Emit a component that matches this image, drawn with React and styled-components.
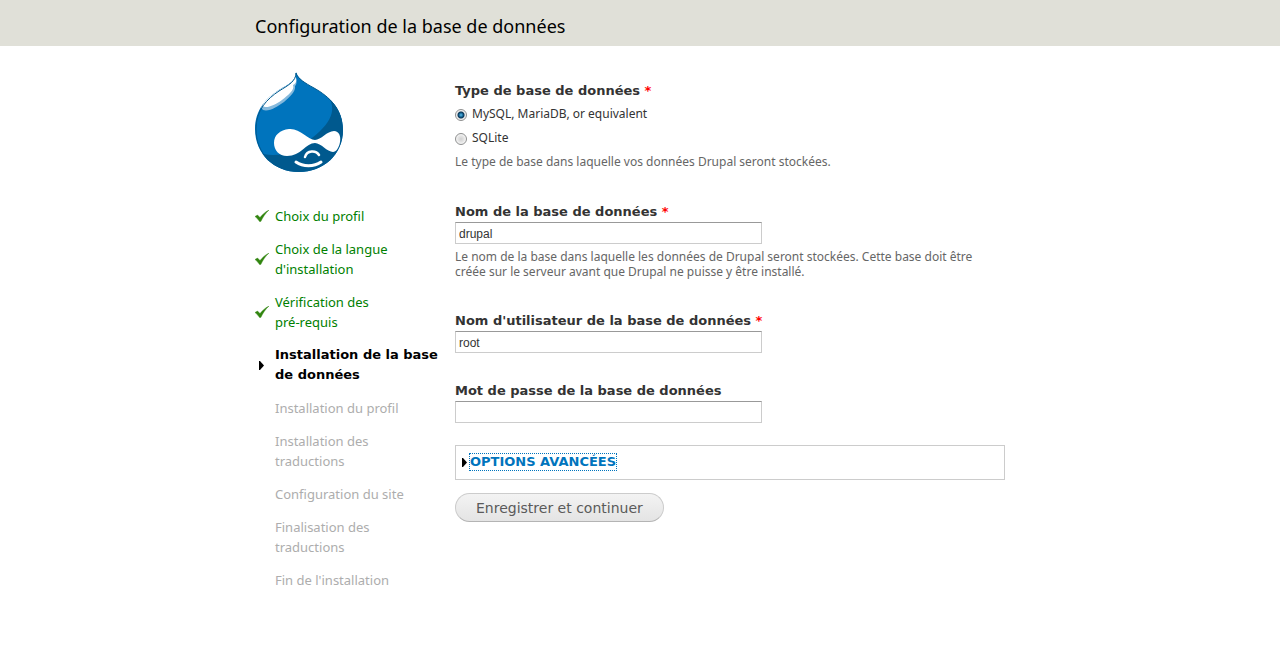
import React, { useState } from "react"
import styled, { createGlobalStyle } from "styled-components"

const GlobalStyle = createGlobalStyle`
  * {
    box-sizing: border-box;
  }
  body {
    margin: 0;
    background-color: #fff;
    color: #333;
    font-family: "Lucida Grande", "Lucida Sans Unicode", "Noto Sans", "Open Sans", sans-serif;
    font-size: 13px;
    line-height: 20px;
  }
`

const boldFont = `"Lucida Grande", "Lucida Sans Unicode", "DejaVu Sans", sans-serif`

const Branding = styled.header`
  background-color: #e0e0d8;
`

const Title = styled.h1`
  max-width: 770px;
  margin: 0 auto;
  padding: 14px 0 8px;
  color: #000;
  font-size: 18px;
  font-weight: normal;
  line-height: 24px;
`

const Page = styled.div`
  display: flex;
  align-items: flex-start;
  max-width: 770px;
  margin: 0 auto;
  padding-right: 20px;
`

const Sidebar = styled.aside`
  flex: 0 0 200px;
  padding-top: 26px;
`

const Logo = styled.svg`
  display: block;
  width: 88px;
  height: 100px;
  margin-bottom: 34px;
`

const TaskList = styled.ol`
  display: flex;
  flex-direction: column;
  gap: 13px;
  margin: 0;
  padding: 0;
  list-style: none;
`

const taskColors = {
  done: "#008000",
  active: "#000",
  todo: "#adadad",
}

const Task = styled.li`
  display: flex;
  align-items: center;
  width: 185px;
  color: ${({ $state }) => taskColors[$state]};
  white-space: pre-line;
  ${({ $state }) =>
    $state === "active" &&
    `
    font-family: ${boldFont};
    font-weight: bold;
  `}
`

const TaskMark = styled.span`
  display: flex;
  flex: 0 0 20px;

  svg {
    display: block;
  }
`

const Content = styled.main`
  flex: 1;
  min-width: 0;
  padding: 35px 0 40px;
`

const Field = styled.div`
  margin-bottom: ${({ $gap }) => $gap}px;
`

const RadioField = styled.fieldset`
  margin: 0 0 33px;
  padding: 0;
  border: 0;
`

const Legend = styled.legend`
  padding: 0;
  font-family: ${boldFont};
  font-weight: bold;
`

const Label = styled.label`
  display: block;
  font-family: ${boldFont};
  font-weight: bold;
`

const Required = styled.span`
  color: #f00;
`

const Radios = styled.div`
  padding: 1px 0 4px;
`

const RadioLabel = styled.label`
  display: flex;
  align-items: center;
  gap: 5px;
  font-size: 12px;
  line-height: 24px;
`

const Radio = styled.input`
  appearance: none;
  flex: none;
  width: 12px;
  height: 12px;
  margin: 2px 0 0;
  border: 1px solid #8e8f8f;
  border-radius: 50%;
  background: radial-gradient(circle, #d0d0d0 0, #e4e4e4 3px, #f6f6f6 5px);

  &:checked {
    background: radial-gradient(circle at 50% 50%, #5fc3ee 0, #14608f 2px, #0b3656 3px, #e8e8e8 4px, #f6f6f6 5px);
  }
`

const Description = styled.div`
  max-width: 540px;
  color: #666;
  font-size: 12px;
  line-height: 15px;
`

const TextInput = styled.input`
  display: block;
  width: 307px;
  max-width: 100%;
  height: 22px;
  margin: 0 0 5px;
  padding: 2px 3px 1px;
  border: 1px solid #ccc;
  border-top-color: #999;
  border-radius: 0;
  background-color: #fff;
  color: #333;
  font-family: "Liberation Sans", Arial, sans-serif;
  font-size: 12px;
  outline: none;
`

const Advanced = styled.section`
  display: flex;
  align-items: center;
  gap: 3px;
  height: 35px;
  margin-bottom: 13px;
  padding: 0 6px 1px;
  border: 1px solid #ccc;
`

const AdvancedLink = styled.a`
  outline: 1px dotted #0074bd;
  color: #0074bd;
  font-family: ${boldFont};
  font-weight: bold;
  line-height: 16px;
  text-decoration: none;
  text-transform: uppercase;
`

const SubmitButton = styled.button`
  height: 29px;
  padding: 0 20px;
  border: 1px solid #ccc;
  border-bottom-color: #b4b4b4;
  border-radius: 15px;
  background: linear-gradient(#f3f3f3, #e4e4e4);
  color: #5a5a5a;
  font-family: Verdana, "DejaVu Sans", sans-serif;
  font-size: 14px;
  cursor: pointer;
`

const tasks = [
  { label: "Choix du profil", state: "done" },
  { label: "Choix de la langue\nd'installation", state: "done" },
  { label: "Vérification des\npré-requis", state: "done" },
  { label: "Installation de la base\nde données", state: "active" },
  { label: "Installation du profil", state: "todo" },
  { label: "Installation des\ntraductions", state: "todo" },
  { label: "Configuration du site", state: "todo" },
  { label: "Finalisation des\ntraductions", state: "todo" },
  { label: "Fin de l'installation", state: "todo" },
]

const drivers = [
  { value: "mysql", label: "MySQL, MariaDB, or equivalent" },
  { value: "sqlite", label: "SQLite" },
]

const Druplicon = () => (
  <Logo viewBox="0 0 88 100" role="img" aria-label="Drupal">
    <defs>
      <clipPath id="drop">
        <path d="M41 0C43 7 50 11 59 16C75 25 88 37 88 58C88 83 68 100 44 100C19 100 0 82 0 57C0 38 11 26 24 18C34 12 41 9 41 0Z" />
      </clipPath>
    </defs>
    <g clipPath="url(#drop)">
      <rect width="88" height="100" fill="#0074bd" />
      <path d="M70 20C82 34 80 48 57 66C42 81 22 87 0 80V100H88V20Z" fill="#00598e" />
      <path d="M40 3C42 9 42 12 40 14C41 19 35 25 29 30C22 35 14 40 8 38L5 34L24 17Z" fill="#85b9dc" />
      <path d="M40 2C42 8 42 11 38 13C40 18 33 23 27 28C20 33 11 37 8 34C7 28 15 22 24 18C34 13 39 10 40 2Z" fill="#fff" />
    </g>
    <path
      d="M41 1C43 7 50 11 59 16C75 25 87 37 87 58C87 82 68 99 44 99C19 99 1 82 1 57C1 38 12 27 24 19C34 13 41 9 41 1Z"
      fill="none"
      stroke="#00598e"
    />
    <path
      d="M34 57C45 56 53 68 60 68C66 68 72 59 79 59C84 59 86 64 85 70C84 76 81 80 78 80C72 80 66 71 60 71C51 71 46 84 32 84C24 84 19 78 19 71C19 63 25 58 34 57Z"
      fill="#fff"
    />
    <path d="M50 85C52 78 61 78 64 83" fill="none" stroke="#fff" strokeWidth="2.5" strokeLinecap="round" />
    <path d="M41 90C48 95 59 95 66 90" fill="none" stroke="#fff" strokeWidth="3" strokeLinecap="round" />
  </Logo>
)

const Check = () => (
  <svg width="14" height="12" viewBox="0 0 14 12" aria-hidden="true">
    <path d="M0 6.500L2.500 5L5 7.500C7.500 4.500 10 2 14 0C10.500 3.200 8 7 5.800 11.500H4.500C3.200 9.500 1.800 7.800 0 6.500Z" fill="#31850f" stroke="#31850f" strokeWidth="0.4" />
  </svg>
)

const Arrow = ({ indent = 0 }) => (
  <svg width={indent + 5} height="9" viewBox={`${-indent} 0 ${indent + 5} 9`} aria-hidden="true">
    <path d="M0 0H1L5 4.500L1 9H0Z" fill="#000" />
  </svg>
)

const marks = { done: <Check />, active: <Arrow indent={4} /> }

const Star = () => <Required title="Ce champ est requis."> *</Required>

export default function App() {
  const [driver, setDriver] = useState("mysql")

  return (
    <>
      <GlobalStyle />
      <Branding>
        <Title>Configuration de la base de données</Title>
      </Branding>
      <Page>
        <Sidebar>
          <Druplicon />
          <TaskList>
            {tasks.map(({ label, state }) => (
              <Task key={label} $state={state}>
                <TaskMark>{marks[state]}</TaskMark>
                <span>{label}</span>
              </Task>
            ))}
          </TaskList>
        </Sidebar>
        <Content>
          <form onSubmit={(e) => e.preventDefault()}>
            <RadioField>
              <Legend>Type de base de données<Star /></Legend>
              <Radios>
                {drivers.map(({ value, label }) => (
                  <RadioLabel key={value}>
                    <Radio
                      type="radio"
                      name="driver"
                      value={value}
                      checked={driver === value}
                      onChange={() => setDriver(value)}
                    />
                    {label}
                  </RadioLabel>
                ))}
              </Radios>
              <Description>Le type de base dans laquelle vos données Drupal seront stockées.</Description>
            </RadioField>
            <Field $gap={32}>
              <Label htmlFor="database">Nom de la base de données<Star /></Label>
              <TextInput id="database" defaultValue="drupal" />
              <Description>
                Le nom de la base dans laquelle les données de Drupal seront stockées. Cette base doit être
                créée sur le serveur avant que Drupal ne puisse y être installé.
              </Description>
            </Field>
            <Field $gap={28}>
              <Label htmlFor="username">Nom d'utilisateur de la base de données<Star /></Label>
              <TextInput id="username" defaultValue="root" />
            </Field>
            <Field $gap={22}>
              <Label htmlFor="password">Mot de passe de la base de données</Label>
              <TextInput id="password" type="password" />
            </Field>
            <Advanced>
              <Arrow />
              <AdvancedLink href="#advanced">Options avancées</AdvancedLink>
            </Advanced>
            <SubmitButton type="submit">Enregistrer et continuer</SubmitButton>
          </form>
        </Content>
      </Page>
    </>
  )
}
